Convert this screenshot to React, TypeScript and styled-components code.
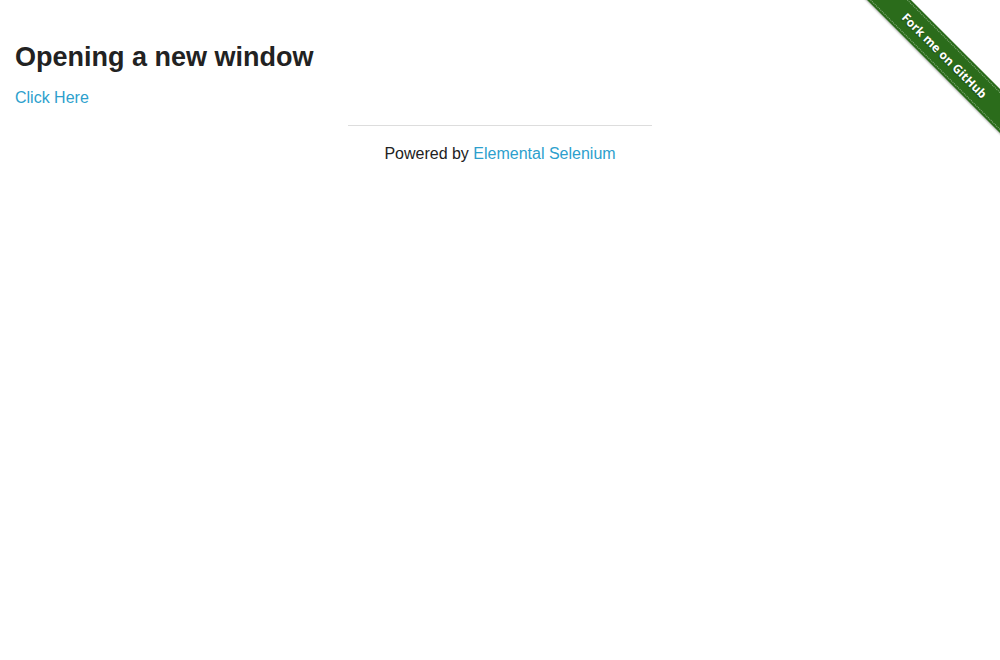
import React from "react";
import styled, { createGlobalStyle } from "styled-components";

const Global = createGlobalStyle`
  html, body { margin: 0; padding: 0; background: #fff; }
  body {
    font-family: "Liberation Sans", Arial, Helvetica, sans-serif;
    color: #222;
    font-size: 16px;
    line-height: 1.5;
  }
`;

const Page = styled.div`
  position: relative;
  width: 1000px;
  min-height: 660px;
  padding-top: 41px;
  box-sizing: border-box;
`;

const Row = styled.div`
  padding: 0 15px;
`;

const Heading = styled.h3`
  margin: 0 0 13px;
  font-size: 27px;
  line-height: 1.2;
  font-weight: bold;
  color: #222;
`;

const Link = styled.a`
  color: #2d9fcd;
  text-decoration: none;
  cursor: pointer;
`;

const Footer = styled.div`
  width: 304px;
  margin: 15px auto 0;
`;

const Rule = styled.hr`
  margin: 0 0 16px;
  border: 0;
  border-top: 1px solid #ddd;
  height: 0;
`;

const Centered = styled.div`
  text-align: center;
  color: #222;
`;

const RibbonWrap = styled.div`
  position: absolute;
  top: 0;
  right: 0;
  width: 149px;
  height: 149px;
  overflow: hidden;
`;

const Band = styled.a`
  position: absolute;
  left: -8px;
  top: 40px;
  width: 203px;
  height: 31px;
  background: #2b6c1b;
  transform: rotate(45deg);
  display: flex;
  align-items: center;
  justify-content: center;
  color: #fff;
  text-decoration: none;
  font-family: "Open Sans", "DejaVu Sans", sans-serif;
  font-weight: bold;
  font-size: 12px;
  letter-spacing: 0.1px;
  box-shadow: 0 1px 2px rgba(0, 0, 0, 0.3);
  &::before {
    content: "";
    position: absolute;
    left: 0;
    right: 0;
    top: 2px;
    bottom: 2px;
    border-top: 1px dotted rgba(255, 255, 255, 0.45);
    border-bottom: 1px dotted rgba(255, 255, 255, 0.45);
  }
`;

const BandText = styled.span`
  position: relative;
  text-shadow: 0 1px 1px rgba(0, 0, 0, 0.4);
`;

export default function App() {
  return (
    <>
      <Global />
      <Page>
        <Row>
          <Heading>Opening a new window</Heading>
          <Link>Click Here</Link>
        </Row>
        <Footer>
          <Rule />
          <Centered>
            Powered by <Link>Elemental Selenium</Link>
          </Centered>
        </Footer>
        <RibbonWrap>
          <Band>
            <BandText>Fork me on GitHub</BandText>
          </Band>
        </RibbonWrap>
      </Page>
    </>
  );
}
